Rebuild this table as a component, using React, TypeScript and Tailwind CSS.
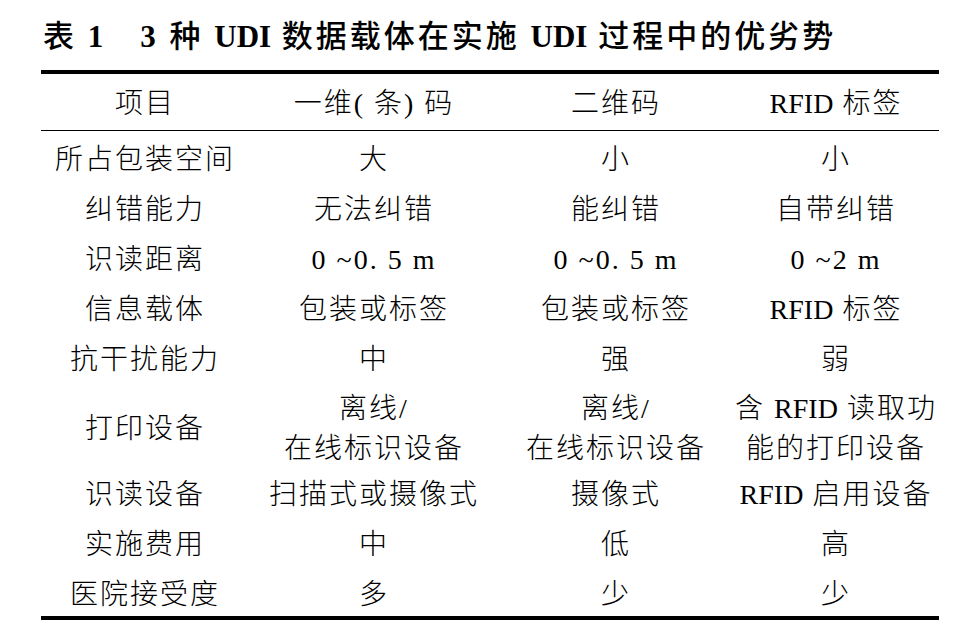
import React from "react";

const font = { fontFamily: '"Liberation Serif", "Noto Sans CJK SC", serif' };

function T({ s }: { s: string }) {
  const parts = s.split(/([A-Za-z]+)/);
  return (
    <>
      {parts.map((p, i) =>
        /^[A-Za-z]+$/.test(p) ? (
          <span key={i} className="tracking-normal">
            {p}
          </span>
        ) : (
          <React.Fragment key={i}>{p}</React.Fragment>
        )
      )}
    </>
  );
}

type Row = { cells: React.ReactNode[]; tall?: boolean };

const rows: Row[] = [
  { cells: ["所占包装空间", "大", "小", "小"] },
  { cells: ["纠错能力", "无法纠错", "能纠错", "自带纠错"] },
  { cells: ["识读距离", "0 ~0. 5 m", "0 ~0. 5 m", "0 ~2 m"] },
  { cells: ["信息载体", "包装或标签", "包装或标签", <T s="RFID 标签" />] },
  { cells: ["抗干扰能力", "中", "强", "弱"] },
  {
    tall: true,
    cells: [
      "打印设备",
      <>离线/<br />在线标识设备</>,
      <>离线/<br />在线标识设备</>,
      <>
        <T s="含 RFID 读取功" />
        <br />能的打印设备
      </>,
    ],
  },
  { cells: ["识读设备", "扫描式或摄像式", "摄像式", <T s="RFID 启用设备" />] },
  { cells: ["实施费用", "中", "低", "高"] },
  { cells: ["医院接受度", "多", "少", "少"] },
];

const cols = "grid grid-cols-[208px_250px_234px_206px]";

export default function App() {
  return (
    <div className="w-[975px] h-[638px] bg-white text-black overflow-hidden" style={font}>
      <div className="pl-[43px] pt-[15px] h-[70px]">
        <h1 className="text-[31px] leading-[44px] font-medium whitespace-pre tracking-[3px]">
          表<span className="font-bold"> 1　3 </span>种<span className="font-bold"> <span className="tracking-normal">UDI</span> </span>数据载体在实施<span className="font-bold"> <span className="tracking-normal">UDI</span> </span>过程中的优劣势
        </h1>
      </div>
      <div className="ml-[41px] w-[898px] border-t-[4px] border-b-[4px] border-black">
        <div className={`${cols} h-[57px] pt-[4px] border-b border-black items-center text-[28px] font-light tracking-[2px]`}>
          <div className="text-center">项目</div>
          <div className="text-center whitespace-pre">一维( 条) 码</div>
          <div className="text-center">二维码</div>
          <div className="text-center">
            <T s="RFID 标签" />
          </div>
        </div>
        {rows.map((r, i) => (
          <div
            key={i}
            className={`${cols} ${r.tall ? "h-[85px]" : "h-[50px]"} pt-[8px] items-center text-[28px] font-light tracking-[2px]`}
          >
            {r.cells.map((c, j) => (
              <div key={j} className="text-center whitespace-pre leading-[40px]">
                {c}
              </div>
            ))}
          </div>
        ))}
      </div>
    </div>
  );
}
